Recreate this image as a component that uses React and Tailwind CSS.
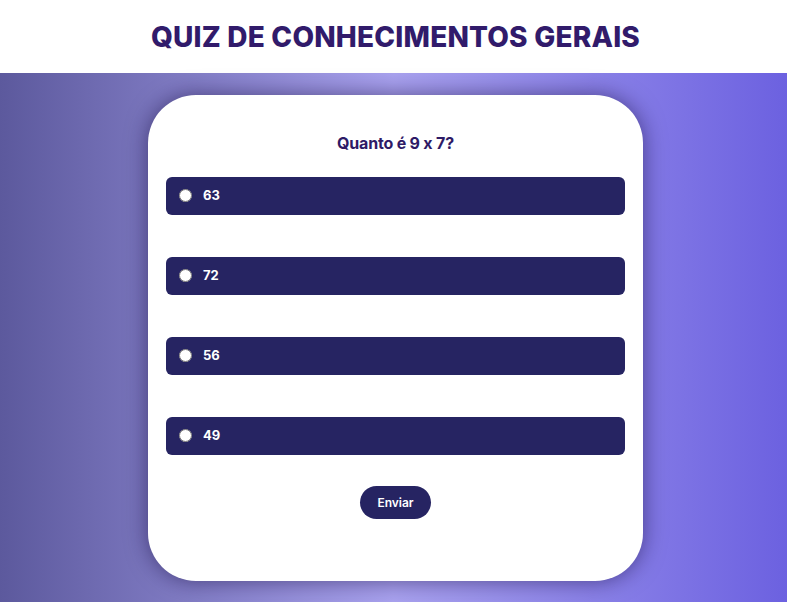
export default function App() {
  const options = ['63', '72', '56', '49']

  return (
    <div className="min-h-screen flex flex-col pl-[4px] font-['Inter','Noto_Sans',sans-serif]">
      <header className="h-[73px] bg-white flex items-center justify-center">
        <h1 className="text-[28px] font-extrabold text-[#311b6b] tracking-[0.2px] leading-none">
          QUIZ DE CONHECIMENTOS GERAIS
        </h1>
      </header>
      <main className="flex-1 py-[22px] -ml-[4px] pl-[4px] bg-[linear-gradient(to_right,#5c599d,#a9a2ef,#6c61e0)]">
        <div className="w-[495px] h-[486px] mx-auto bg-white rounded-[48px] shadow-[0_0_22px_rgba(20,10,60,0.55)] px-[18px] pt-[37px] flex flex-col">
          <h2 className="text-center text-[16px] font-bold text-[#2e1a66] leading-[22px] tracking-[-0.2px]">
            Quanto é 9 x 7?
          </h2>
          <div className="mt-[23px] flex flex-col gap-[42px]">
            {options.map((opt) => (
              <label
                key={opt}
                className="h-[38px] bg-[#262462] rounded-[6px] flex items-center pl-[13px] text-white text-[13px] font-bold"
              >
                <input type="radio" name="answer" className="w-[13px] h-[13px] m-0 mr-[11px] -mt-[2px]" />
                {opt}
              </label>
            ))}
          </div>
          <div className="mt-[31px] flex justify-center">
            <button className="w-[71px] h-[33px] rounded-full bg-[#262462] text-white text-[12px] font-semibold">
              Enviar
            </button>
          </div>
        </div>
      </main>
    </div>
  )
}
